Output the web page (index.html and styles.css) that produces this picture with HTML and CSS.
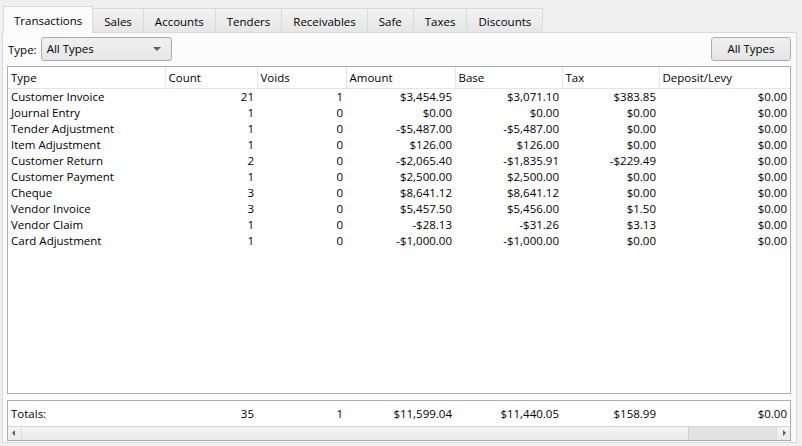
FILE: index.html
```html
<!DOCTYPE html>
<html lang="en">
<head>
    <meta charset="UTF-8">
    <title>Transactions</title>
    <link rel="stylesheet" href="styles.css">
</head>
<body>
    <div class="tabs">
        <div class="tab active">Transactions</div>
        <div class="tab">Sales</div>
        <div class="tab">Accounts</div>
        <div class="tab">Tenders</div>
        <div class="tab">Receivables</div>
        <div class="tab">Safe</div>
        <div class="tab">Taxes</div>
        <div class="tab">Discounts</div>
    </div>
    <div class="page">
        <div class="toolbar">
            <span class="lbl">Type:</span>
            <div class="combo">All Types<span class="arrow"></span></div>
            <div class="spacer"></div>
            <div class="btn">All Types</div>
        </div>
        <div class="grid">
            <table>
                <colgroup>
                    <col class="c1"><col class="c2"><col class="c3"><col class="c4"><col class="c5"><col class="c6"><col class="c7">
                </colgroup>
                <thead>
                    <tr><th>Type</th><th>Count</th><th>Voids</th><th>Amount</th><th>Base</th><th>Tax</th><th>Deposit/Levy</th></tr>
                </thead>
                <tbody>
                    <tr><td>Customer Invoice</td><td>21</td><td>1</td><td>$3,454.95</td><td>$3,071.10</td><td>$383.85</td><td>$0.00</td></tr>
                    <tr><td>Journal Entry</td><td>1</td><td>0</td><td>$0.00</td><td>$0.00</td><td>$0.00</td><td>$0.00</td></tr>
                    <tr><td>Tender Adjustment</td><td>1</td><td>0</td><td>-$5,487.00</td><td>-$5,487.00</td><td>$0.00</td><td>$0.00</td></tr>
                    <tr><td>Item Adjustment</td><td>1</td><td>0</td><td>$126.00</td><td>$126.00</td><td>$0.00</td><td>$0.00</td></tr>
                    <tr><td>Customer Return</td><td>2</td><td>0</td><td>-$2,065.40</td><td>-$1,835.91</td><td>-$229.49</td><td>$0.00</td></tr>
                    <tr><td>Customer Payment</td><td>1</td><td>0</td><td>$2,500.00</td><td>$2,500.00</td><td>$0.00</td><td>$0.00</td></tr>
                    <tr><td>Cheque</td><td>3</td><td>0</td><td>$8,641.12</td><td>$8,641.12</td><td>$0.00</td><td>$0.00</td></tr>
                    <tr><td>Vendor Invoice</td><td>3</td><td>0</td><td>$5,457.50</td><td>$5,456.00</td><td>$1.50</td><td>$0.00</td></tr>
                    <tr><td>Vendor Claim</td><td>1</td><td>0</td><td>-$28.13</td><td>-$31.26</td><td>$3.13</td><td>$0.00</td></tr>
                    <tr><td>Card Adjustment</td><td>1</td><td>0</td><td>-$1,000.00</td><td>-$1,000.00</td><td>$0.00</td><td>$0.00</td></tr>
                </tbody>
            </table>
        </div>
        <div class="totals">
            <table>
                <colgroup>
                    <col class="c1"><col class="c2"><col class="c3"><col class="c4"><col class="c5"><col class="c6"><col class="c7">
                </colgroup>
                <tr><td>Totals:</td><td>35</td><td>1</td><td>$11,599.04</td><td>$11,440.05</td><td>$158.99</td><td>$0.00</td></tr>
            </table>
            <div class="hscroll">
                <div class="sarrow left"></div>
                <div class="track"><div class="thumb"></div></div>
                <div class="sarrow right"></div>
            </div>
        </div>
    </div>
</body>
</html>
```
FILE: styles.css
```css
*{
    box-sizing: border-box;
    margin: 0;
    padding: 0;
}
body{
    background-color: #f0f0f0;
    font-family: "Open Sans", sans-serif;
    font-size: 11.5px;
    color: #000;
    padding: 6px 5px 0 2px;
}
.tabs{
    display: flex;
    height: 26px;
    padding-left: 1px;
    position: relative;
    z-index: 1;
}
.tab{
    height: 24px;
    margin-top: 2px;
    padding: 1px 11px 0;
    line-height: 24px;
    border: 1px solid #d9d9d9;
    border-bottom: none;
    margin-right: -1px;
    background: linear-gradient(#f2f2f2, #e6e6e6);
}
.tab.active{
    height: 27px;
    margin-top: 0;
    background: #fbfbfb;
    padding: 1px 10px 0;
    line-height: 26px;
}
.page{
    height: 411px;
    border: 1px solid #d9d9d9;
    background-color: #fbfbfb;
    padding: 4px 5px 3px 4px;
}
.toolbar{
    display: flex;
    align-items: center;
    height: 24px;
}
.lbl{
    margin: 0 4px 0 1px;
}
.combo{
    position: relative;
    width: 131px;
    height: 24px;
    line-height: 22px;
    padding-left: 5px;
    border: 1px solid #acacac;
    border-radius: 3px;
    background: linear-gradient(#f0f0f0, #e6e6e6);
}
.arrow{
    position: absolute;
    right: 10px;
    top: 9px;
    border-left: 4px solid transparent;
    border-right: 4px solid transparent;
    border-top: 4px solid #606060;
}
.spacer{
    flex: 1;
}
.btn{
    width: 80px;
    height: 24px;
    line-height: 22px;
    text-align: center;
    border: 1px solid #adadad;
    border-radius: 3px;
    background: linear-gradient(#f0f0f0, #e5e5e5);
}
.grid{
    margin-top: 5px;
    height: 328px;
    border: 1px solid #acacac;
    background-color: #fff;
}
table{
    width: 782px;
    table-layout: fixed;
    border-collapse: collapse;
}
.c1{ width: 157px; }
.c2{ width: 92px; }
.c3{ width: 89px; }
.c4{ width: 109px; }
.c5{ width: 107px; }
.c6{ width: 97px; }
.c7{ width: 131px; }
th{
    height: 21px;
    font-weight: normal;
    text-align: left;
    padding-left: 3px;
    border-right: 1px solid #e5e5e5;
    border-bottom: 1px solid #e5e5e5;
    white-space: nowrap;
}
th:last-child{
    border-right: none;
}
td{
    height: 16px;
    line-height: 16px;
    padding: 0 3px;
    text-align: right;
    white-space: nowrap;
}
td:first-child{
    text-align: left;
}
.totals{
    margin-top: 6px;
    border: 1px solid #acacac;
    background-color: #fff;
}
.totals td{
    height: 25px;
    line-height: 25px;
}
.hscroll{
    display: flex;
    height: 14px;
    border-top: 1px solid #d4d4d4;
    background: linear-gradient(#f4f4f4, #eaeaea);
}
.sarrow{
    width: 14px;
    position: relative;
}
.sarrow::after{
    content: "";
    position: absolute;
    top: 3px;
    border-top: 3px solid transparent;
    border-bottom: 3px solid transparent;
}
.sarrow.left{
    border-right: 1px solid #dcdcdc;
}
.sarrow.left::after{
    left: 4px;
    border-right: 3px solid #606060;
}
.sarrow.right{
    border-left: 1px solid #dcdcdc;
}
.sarrow.right::after{
    left: 6px;
    border-left: 3px solid #606060;
}
.track{
    flex: 1;
    display: flex;
    justify-content: flex-end;
}
.thumb{
    width: 88px;
    border-left: 1px solid #cfcfcf;
    background: #e2e2e2;
}
```
